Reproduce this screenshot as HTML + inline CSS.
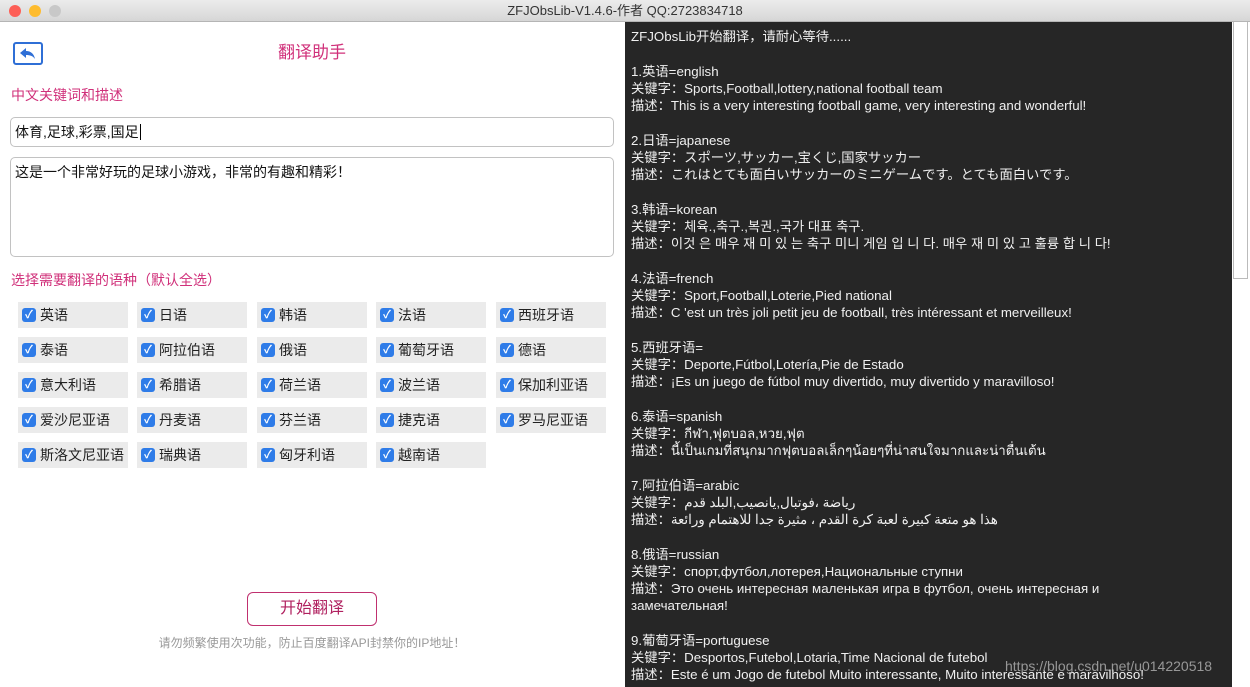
<!DOCTYPE html>
<html><head><meta charset="utf-8"><style>
*{margin:0;padding:0;box-sizing:border-box}
body{width:1250px;height:687px;overflow:hidden;background:#fff;font-family:"Liberation Sans","Noto Sans CJK SC",sans-serif;position:relative}
.tb{position:absolute;left:0;top:0;width:1250px;height:22px;background:linear-gradient(#ececec,#d6d6d6);border-bottom:1px solid #b5b5b5;text-align:center;font-size:13px;line-height:22px;color:#333}
.dot{position:absolute;top:5px;width:12px;height:12px;border-radius:50%}
.pink{color:#d0307a}
.abs{position:absolute}
.inp{position:absolute;left:10px;width:604px;border:1px solid #c2c2c2;border-radius:5px;font-size:14px;color:#111;padding-left:4px}
.cb{position:absolute;width:110px;height:26px;background:#ebebeb;font-size:14px;line-height:26px;color:#222;padding-left:22px}
.cb:before{content:"✓";position:absolute;left:4px;top:6px;width:14px;height:14px;border-radius:3px;background:#2f7ce8;color:#fff;font-size:11px;line-height:14px;text-align:center;font-weight:bold}
.right{position:absolute;left:625px;top:22px;width:607px;height:665px;background:#262626;color:#f0f0f0;font-size:13.3px;line-height:17.25px;padding:6px 0 0 6px;white-space:pre;overflow:hidden}
.sb{position:absolute;left:1232px;top:22px;width:18px;height:665px;background:#fff}
.thumb{position:absolute;left:1233px;top:22px;width:15px;height:257px;background:#fff;border:1px solid #bbb;border-top:none}
</style></head><body>
<div class="tb">ZFJObsLib-V1.4.6-作者 QQ:2723834718
<div class="dot" style="left:9px;background:#fd5f57"></div>
<div class="dot" style="left:29px;background:#febc2e"></div>
<div class="dot" style="left:49px;background:#c8c8c8"></div></div>

<div class="abs" style="left:13px;top:42px;width:30px;height:23px;border:2px solid #2f6fd6;border-radius:3px">
<svg width="26" height="19" viewBox="0 0 26 19"><path d="M5 9 L11 4 L11 7 C16 7 19 10 20 15 C18 12 15 11 11 11 L11 14 Z" fill="#2f6fd6"/></svg></div>
<div class="abs pink" style="left:0;width:624px;top:38px;text-align:center;font-size:17px">翻译助手</div>
<div class="abs pink" style="left:11px;top:85px;font-size:14px">中文关键词和描述</div>
<div class="inp" style="top:117px;height:30px;line-height:28px">体育,足球,彩票,国足<span style="border-left:1px solid #000;margin-left:1px"></span></div>
<div class="inp" style="top:157px;height:100px;line-height:28px;padding-top:0">这是一个非常好玩的足球小游戏，非常的有趣和精彩！</div>
<div class="abs pink" style="left:11px;top:270px;font-size:14px">选择需要翻译的语种（默认全选）</div>

<div class="cb" style="left:18px;top:302px">英语</div><div class="cb" style="left:137px;top:302px">日语</div><div class="cb" style="left:257px;top:302px">韩语</div><div class="cb" style="left:376px;top:302px">法语</div><div class="cb" style="left:496px;top:302px">西班牙语</div>
<div class="cb" style="left:18px;top:337px">泰语</div><div class="cb" style="left:137px;top:337px">阿拉伯语</div><div class="cb" style="left:257px;top:337px">俄语</div><div class="cb" style="left:376px;top:337px">葡萄牙语</div><div class="cb" style="left:496px;top:337px">德语</div>
<div class="cb" style="left:18px;top:372px">意大利语</div><div class="cb" style="left:137px;top:372px">希腊语</div><div class="cb" style="left:257px;top:372px">荷兰语</div><div class="cb" style="left:376px;top:372px">波兰语</div><div class="cb" style="left:496px;top:372px">保加利亚语</div>
<div class="cb" style="left:18px;top:407px">爱沙尼亚语</div><div class="cb" style="left:137px;top:407px">丹麦语</div><div class="cb" style="left:257px;top:407px">芬兰语</div><div class="cb" style="left:376px;top:407px">捷克语</div><div class="cb" style="left:496px;top:407px">罗马尼亚语</div>
<div class="cb" style="left:18px;top:442px">斯洛文尼亚语</div><div class="cb" style="left:137px;top:442px">瑞典语</div><div class="cb" style="left:257px;top:442px">匈牙利语</div><div class="cb" style="left:376px;top:442px">越南语</div>

<div class="abs pink" style="left:247px;top:592px;width:130px;height:34px;border:1px solid #c0306f;border-radius:6px;text-align:center;line-height:32px;font-size:16px;color:#b0205f">开始翻译</div>
<div class="abs" style="left:0;width:624px;top:634px;text-align:center;font-size:12px;color:#999">请勿频繁使用次功能，防止百度翻译API封禁你的IP地址！</div>

<div class="right">ZFJObsLib开始翻译，请耐心等待......

1.英语=english
关键字：Sports,Football,lottery,national football team
描述：This is a very interesting football game, very interesting and wonderful!

2.日语=japanese
关键字：スポーツ,サッカー,宝くじ,国家サッカー
描述：これはとても面白いサッカーのミニゲームです。とても面白いです。

3.韩语=korean
关键字：체육.,축구.,복권.,국가 대표 축구.
描述：이것 은 매우 재 미 있 는 축구 미니 게임 입 니 다. 매우 재 미 있 고 훌륭 합 니 다!

4.法语=french
关键字：Sport,Football,Loterie,Pied national
描述：C 'est un très joli petit jeu de football, très intéressant et merveilleux!

5.西班牙语=
关键字：Deporte,Fútbol,Lotería,Pie de Estado
描述：¡Es un juego de fútbol muy divertido, muy divertido y maravilloso!

6.泰语=spanish
关键字：กีฬา,ฟุตบอล,หวย,ฟุต
描述：นี้เป็นเกมที่สนุกมากฟุตบอลเล็กๆน้อยๆที่น่าสนใจมากและน่าตื่นเต้น

7.阿拉伯语=arabic
关键字：رياضة ،فوتبال,يانصيب,البلد قدم
描述：هذا هو متعة كبيرة لعبة كرة القدم ، مثيرة جدا للاهتمام ورائعة

8.俄语=russian
关键字：спорт,футбол,лотерея,Национальные ступни
描述：Это очень интересная маленькая игра в футбол, очень интересная и
замечательная!

9.葡萄牙语=portuguese
关键字：Desportos,Futebol,Lotaria,Time Nacional de futebol
描述：Este é um Jogo de futebol Muito interessante, Muito interessante e maravilhoso!</div>
<div class="sb"></div><div class="thumb"></div>
<div class="abs" style="left:1005px;top:658px;font-size:14px;color:rgba(200,200,200,0.7)">https://blog.csdn.net/u014220518</div>
</body></html>
